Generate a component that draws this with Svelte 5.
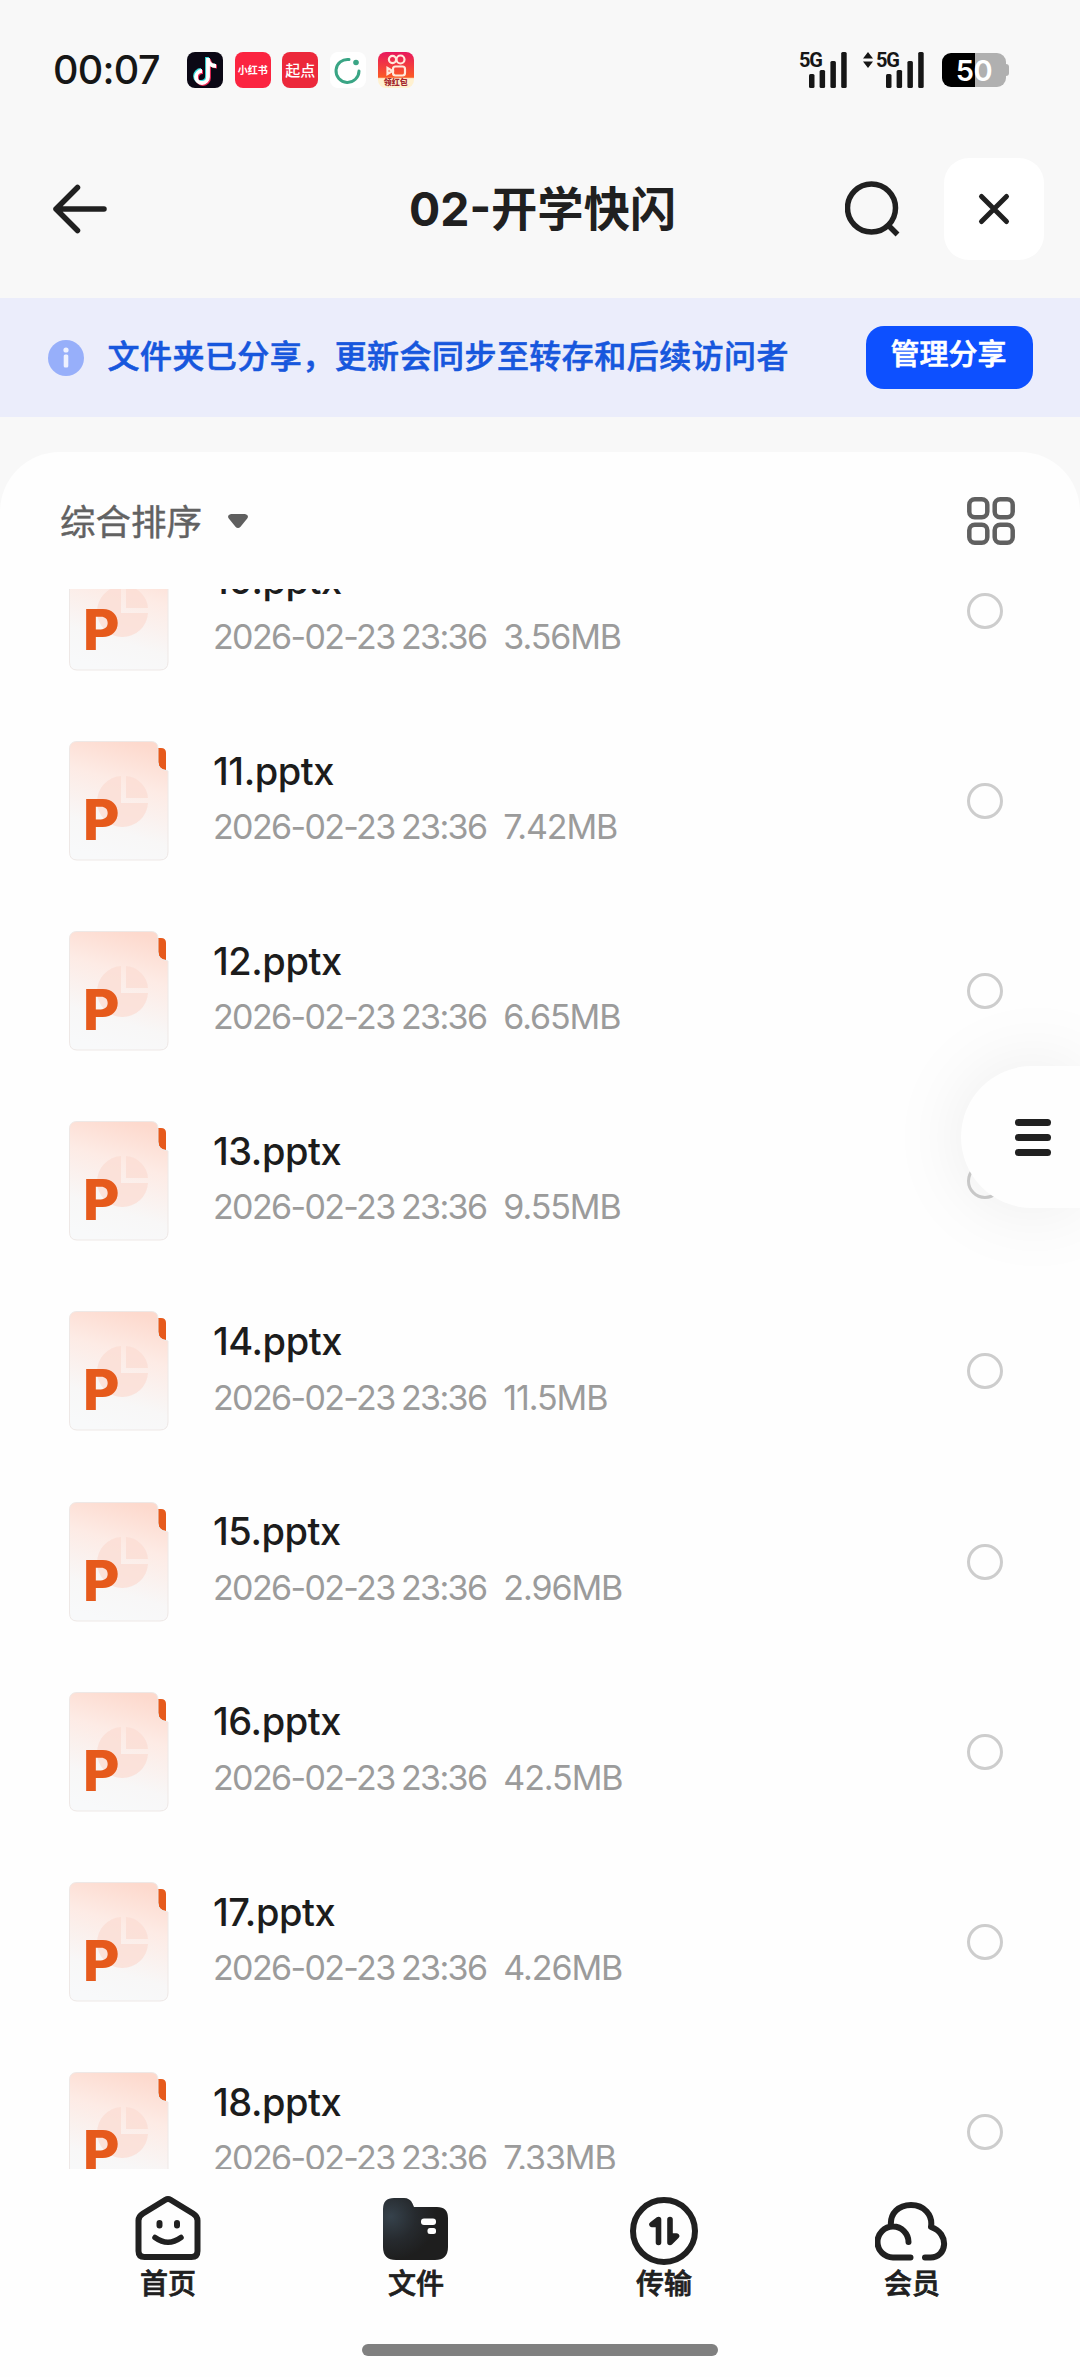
<script>
  const files = [
    { name: '10.pptx', size: '3.56MB' },
    { name: '11.pptx', size: '7.42MB' },
    { name: '12.pptx', size: '6.65MB' },
    { name: '13.pptx', size: '9.55MB' },
    { name: '14.pptx', size: '11.5MB' },
    { name: '15.pptx', size: '2.96MB' },
    { name: '16.pptx', size: '42.5MB' },
    { name: '17.pptx', size: '4.26MB' },
    { name: '18.pptx', size: '7.33MB' }
  ];
  const stamp = '2026-02-23 23:36';
</script>

{#snippet signal()}
  <svg class="bars" width="39" height="36" viewBox="0 0 39 36" fill="#161616">
    <rect x="0" y="22" width="5.5" height="14" rx="1.5" />
    <rect x="10.6" y="18" width="5.5" height="18" rx="1.5" />
    <rect x="21.4" y="9" width="5.5" height="27" rx="1.5" />
    <rect x="32.2" y="0" width="5.5" height="36" rx="1.5" />
  </svg>
{/snippet}

<div class="screen">
  <header class="status">
    <span class="time">00:07</span>
    <div class="apps">
      <svg width="36" height="36" viewBox="0 0 36 36">
        <rect width="36" height="36" rx="8" fill="#0b0815" />
        <g fill="none" stroke-width="3.8">
          <path d="M20 5v19a6 6 0 1 1-6-6M20 7c1 4 4 6.500 8 6.500" stroke="#36dfe0" />
          <path d="M22 7v19a6 6 0 1 1-6-6M22 8c1 4 4 6.500 8 6.500" stroke="#ee2b58" />
          <path d="M21 6v19a6 6 0 1 1-6-6M21 8c1 4 4 6 8 6" stroke="#fff" />
        </g>
      </svg>
      <span class="app red">小红书</span>
      <span class="app dark">起点</span>
      <svg width="36" height="36" viewBox="0 0 36 36">
        <rect width="36" height="36" rx="8" fill="#fff" />
        <path d="M19 7.500A11.500 11.500 0 1 0 29 19" fill="none" stroke="#3aa585" stroke-width="3" stroke-linecap="round" />
        <circle cx="26" cy="10.500" r="2.800" fill="#3aa585" />
      </svg>
      <span class="app kuai">
        <svg width="36" height="26" viewBox="0 0 36 26" fill="none" stroke="#ffe9dc" stroke-width="2.200">
          <circle cx="14.500" cy="7.500" r="3.600" />
          <circle cx="22.500" cy="7.500" r="4" />
          <rect x="15" y="14.500" width="12" height="9" rx="2.500" />
          <path d="M14.500 19l-5-3v6z" />
        </svg>
        <b>领红包</b>
      </span>
    </div>
    <div class="radio-state">
      <div class="sim"><span>5G</span>{@render signal()}</div>
      <div class="sim second">
        <svg class="updown" width="10" height="16" viewBox="0 0 10 16" fill="#161616"><path d="M5 0l5 6.500H0zM5 16l5-6.500H0z" /></svg>
        <span>5G</span>{@render signal()}
      </div>
      <div class="battery"><span>50</span></div>
    </div>
  </header>

  <div class="titlebar">
    <svg class="back" width="56" height="50" viewBox="0 0 56 50" fill="none" stroke="#202020" stroke-width="5.5" stroke-linecap="round" stroke-linejoin="round">
      <path d="M52 25H4M25.500 3.500L4 25l21.500 21.500" />
    </svg>
    <h1>02-开学快闪</h1>
    <svg class="search" width="56" height="58" viewBox="0 0 56 58" fill="none" stroke="#202020" stroke-width="5.5">
      <circle cx="26.500" cy="28" r="24" />
      <path d="M43.500 45.500l9 9" stroke-width="5.500" />
    </svg>
    <div class="close">
      <svg width="34" height="34" viewBox="0 0 34 34" fill="none" stroke="#202020" stroke-width="5" stroke-linecap="round"><path d="M4.500 4.500l25 25M29.500 4.500l-25 25" /></svg>
    </div>
  </div>

  <div class="notice">
    <svg width="36" height="36" viewBox="0 0 36 36">
      <circle cx="18" cy="18" r="18" fill="#97affa" />
      <circle cx="18" cy="10" r="2.600" fill="#eef1ff" />
      <rect x="15.700" y="14.500" width="4.600" height="13" rx="1.500" fill="#eef1ff" />
    </svg>
    <span>文件夹已分享，更新会同步至转存和后续访问者</span>
    <div class="manage">管理分享</div>
  </div>

  <main class="sheet">
    <div class="sort">
      <span>综合排序</span>
      <svg width="20" height="14" viewBox="0 0 20 14" fill="#5f5f5f"><path d="M3 0h14q4.500 1 2.200 4.500l-6.500 8q-2.700 3-5.400 0l-6.500-8Q-1.500 1 3 0z" /></svg>
      <svg class="grid" width="48" height="48" viewBox="0 0 48 48" fill="none" stroke="#606060" stroke-width="4.5">
        <rect x="2.300" y="2.300" width="18" height="18" rx="5.500" />
        <rect x="27.700" y="2.300" width="18" height="18" rx="5.500" />
        <rect x="2.300" y="27.700" width="18" height="18" rx="5.500" />
        <rect x="27.700" y="27.700" width="18" height="18" rx="5.500" />
      </svg>
    </div>

    <div class="viewport">
      <div class="list">
        {#each files as file}
          <div class="row">
            <svg class="doc" width="100" height="120" viewBox="0 0 100 120">
              <defs>
                <linearGradient id="paper" x1="0.65" y1="0" x2="0.4" y2="1">
                  <stop offset="0" stop-color="#fdd9cd" />
                  <stop offset="0.35" stop-color="#fdebe5" />
                  <stop offset="0.75" stop-color="#f8f7f7" />
                  <stop offset="1" stop-color="#f8f9fa" />
                </linearGradient>
              </defs>
              <path d="M89 7h3q5 0 5 5v17q-8-1-8-8z" fill="#e65a1c" />
              <path d="M8 .5h74q7 0 7 7V21q0 8 10 9v81q0 8-8 8H8q-7.500 0-7.500-8V8Q.5.5 8 .5z" fill="url(#paper)" stroke="#eee8e6" />
              <path d="M52 35a25.500 25.500 0 1 0 27 27H52z" fill="#fbdcd3" opacity=".75" />
              <path d="M57 35a24 24 0 0 1 22 22H57z" fill="#fbdcd3" opacity=".75" />
              <text x="14" y="99">P</text>
            </svg>
            <div class="info">
              <div class="name">{file.name}</div>
              <div class="meta"><span class="stamp">{stamp}</span><span class="size">{file.size}</span></div>
            </div>
            <i class="check"></i>
          </div>
        {/each}
      </div>
    </div>
  </main>

  <nav>
    <div class="tab">
      <svg width="74" height="72" viewBox="0 0 74 72" fill="none" stroke="#202020" stroke-width="6" stroke-linecap="round" stroke-linejoin="round">
        <path d="M34.500 5.800q2.500-1.500 5 0L62 19.500q4.500 2.700 4.500 7V57q0 6-6 6h-47q-6 0-6-6V26.500q0-4.300 4.500-7z" />
        <path d="M28.500 29v2.500M46 29v2.500" />
        <path d="M24 43.500q13 9.500 26 0" stroke-width="5.500" />
      </svg>
      <span>首页</span>
    </div>
    <div class="tab">
      <svg width="74" height="72" viewBox="0 0 74 72">
        <defs>
          <radialGradient id="folder" cx="0.12" cy="0.3" r="0.7">
            <stop offset="0" stop-color="#36424c" />
            <stop offset="0.55" stop-color="#262a2e" />
            <stop offset="1" stop-color="#1e1e1e" />
          </radialGradient>
        </defs>
        <path d="M15 4h10q6 0 8.500 5.500L35 13h23q11 0 11 11v29q0 13-13 13H17Q4 66 4 53V15Q4 4 15 4z" fill="url(#folder)" />
        <rect x="42" y="24.500" width="15" height="6.500" rx="3" fill="#fff" />
        <rect x="48.500" y="34" width="8.500" height="6" rx="2.500" fill="#fff" />
      </svg>
      <span>文件</span>
    </div>
    <div class="tab">
      <svg width="74" height="72" viewBox="0 0 74 72" fill="none" stroke="#202020" stroke-width="6" stroke-linecap="round" stroke-linejoin="round">
        <circle cx="37" cy="37" r="31" />
        <path d="M31.500 48.500v-23l-6.500 5h6M43 25.500v23l6.500-6.500h-6" stroke-width="5.600" />
      </svg>
      <span>传输</span>
    </div>
    <div class="tab">
      <svg width="74" height="72" viewBox="0 0 74 72" fill="none" stroke="#202020" stroke-width="6" stroke-linecap="round" stroke-linejoin="round">
        <path d="M35.500 63.500H18a15.500 15.500 0 1 1 15.500-15.500M16 32.500C14.500 19 24 11 36 11c13 0 22 10 20 22C75 39.500 72 63.500 55.500 63.500h-5.500" />
      </svg>
      <span>会员</span>
    </div>
  </nav>
  <div class="home-bar"></div>

  <div class="float">
    <i></i><i></i><i></i>
  </div>
</div>

<style>
  :global(body) { margin: 0; background: #fefefe; }
  .screen {
    position: relative; width: 1080px; height: 2377px; overflow: hidden;
    display: flex; flex-direction: column; background: #f8f8f8; color: #202020;
    font-family: Inter, "Noto Sans CJK SC", sans-serif; box-sizing: border-box;
  }
  .screen * { box-sizing: border-box; }
  svg { display: block; flex: none; }
  .status { height: 140px; flex: none; display: flex; align-items: center; padding: 0 74px 0 53px; }
  .time { width: 134px; font-size: 39.500px; line-height: 48px; padding-bottom: 1px; font-weight: 550; letter-spacing: -0.700px; color: #161616; }
  .apps { display: flex; gap: 11.700px; }
  .app {
    width: 36px; height: 36px; border-radius: 8px; color: #fff; overflow: hidden; white-space: nowrap;
    display: flex; align-items: center; justify-content: center; font-weight: 700; line-height: 1;
  }
  .red { background: #fb2440; font-size: 10px; }
  .dark { background: #ec283b; font-size: 15px; font-weight: 500; }
  .kuai { flex-direction: column; justify-content: flex-start; background: linear-gradient(#e8185e, #fb5a25 70%, #fff1d0 74%); }
  .kuai b { font-size: 8px; line-height: 9px; color: #a3262d; }
  .radio-state { margin-left: auto; display: flex; align-items: center; }
  .sim { display: flex; align-items: flex-start; height: 36px; }
  .sim span { width: 10px; font: 700 20px/16px Roboto, sans-serif; letter-spacing: -1.200px; color: #161616; }
  .second { margin-left: 15px; }
  .updown { margin-right: 3px; }
  .battery {
    position: relative; width: 64px; height: 34px; margin-left: 17px; border-radius: 9px;
    background: linear-gradient(90deg, #000 33px, #b0b0b0 33px);
    display: flex; align-items: center; justify-content: center;
    font-size: 29px; font-weight: 600; letter-spacing: -0.500px; color: #fff;
  }
  .battery::after { content: ""; position: absolute; left: 63px; top: 11px; width: 4px; height: 12px; border-radius: 0 3px 3px 0; background: #b0b0b0; }

  .titlebar { height: 158px; flex: none; display: flex; align-items: center; padding: 0 36px 20px 52px; }
  h1 { margin: 0 0 0 301px; width: 436px; font-size: 46.300px; line-height: 60px; font-weight: 700; white-space: nowrap; }
  .close { margin-left: 43px; width: 100px; height: 102px; border-radius: 25px; background: #fff; display: flex; align-items: center; justify-content: center; }

  .notice { height: 119px; flex: none; display: flex; align-items: center; padding: 0 47px 0 48px; background: #ebedfb; }
  .notice span { margin-left: 23.500px; padding-bottom: 2px; font-size: 32px; font-weight: 500; letter-spacing: 0.450px; line-height: 40px; color: #1757dd; white-space: nowrap; -webkit-text-stroke: 0.600px; }
  .manage { margin-left: auto; width: 167px; height: 63px; border-radius: 18px; background: #0d50ff; color: #fff; font-size: 29px; font-weight: 500; line-height: 58px; padding-right: 2px; text-align: center; -webkit-text-stroke: 0.600px; }

  .sheet { margin-top: 35px; height: 1717px; flex: none; border-radius: 60px 60px 0 0; background: #fefefe; display: flex; flex-direction: column; }
  .sort { height: 137px; flex: none; display: flex; align-items: center; padding: 1px 65px 0 60px; font-size: 35.500px; color: #626262; }
  .sort span { width: 168px; padding-bottom: 4px; -webkit-text-stroke: 0.400px; }
  .grid { margin-left: auto; }
  .viewport { height: 1580px; flex: none; overflow: hidden; }
  .list { margin-top: -73.500px; }
  .row { height: 190.200px; display: flex; align-items: center; padding: 0 77px 0 69px; }
  .doc text { font: 800 56px Inter, sans-serif; fill: #e65a1c; }
  .info { margin-left: 44px; padding-bottom: 4px; }
  .name { font-size: 38px; font-weight: 480; line-height: 48px; color: #1c1c1c; letter-spacing: -0.450px; }
  .meta { display: flex; margin-top: 8.500px; font-size: 34px; font-weight: 440; line-height: 48px; color: #9b9b9b; white-space: pre; }
  .stamp { letter-spacing: -1.650px; word-spacing: -1.500px; }
  .size { margin-left: 17px; letter-spacing: -1.100px; }
  .check { margin-left: auto; width: 36px; height: 36px; border: 3.500px solid #cdcdcd; border-radius: 50%; }

  nav { height: 135px; flex: none; display: flex; padding: 25px 44px 0; background: #fefefe; }
  .tab { flex: 1; display: flex; flex-direction: column; align-items: center; }
  .tab span { font-size: 28px; font-weight: 500; line-height: 36px; -webkit-text-stroke: 0.700px; }
  .home-bar { flex: 1; background: #fefefe; padding-top: 40px; display: flex; justify-content: center; }
  .home-bar::before { content: ""; width: 356px; height: 12px; border-radius: 6px; background: #808080; }

  /* quick menu pinned over the list's right edge */
  .float {
    position: absolute; right: 0; top: 1066px; width: 119px; height: 142px; border-radius: 71px 0 0 71px;
    background: #fefefe; box-shadow: 0 0 80px rgba(0, 0, 0, 0.08);
    display: flex; flex-direction: column; justify-content: center; gap: 8px; padding-left: 54px;
  }
  .float i { width: 36px; height: 7px; border-radius: 4px; background: #202020; }
</style>
